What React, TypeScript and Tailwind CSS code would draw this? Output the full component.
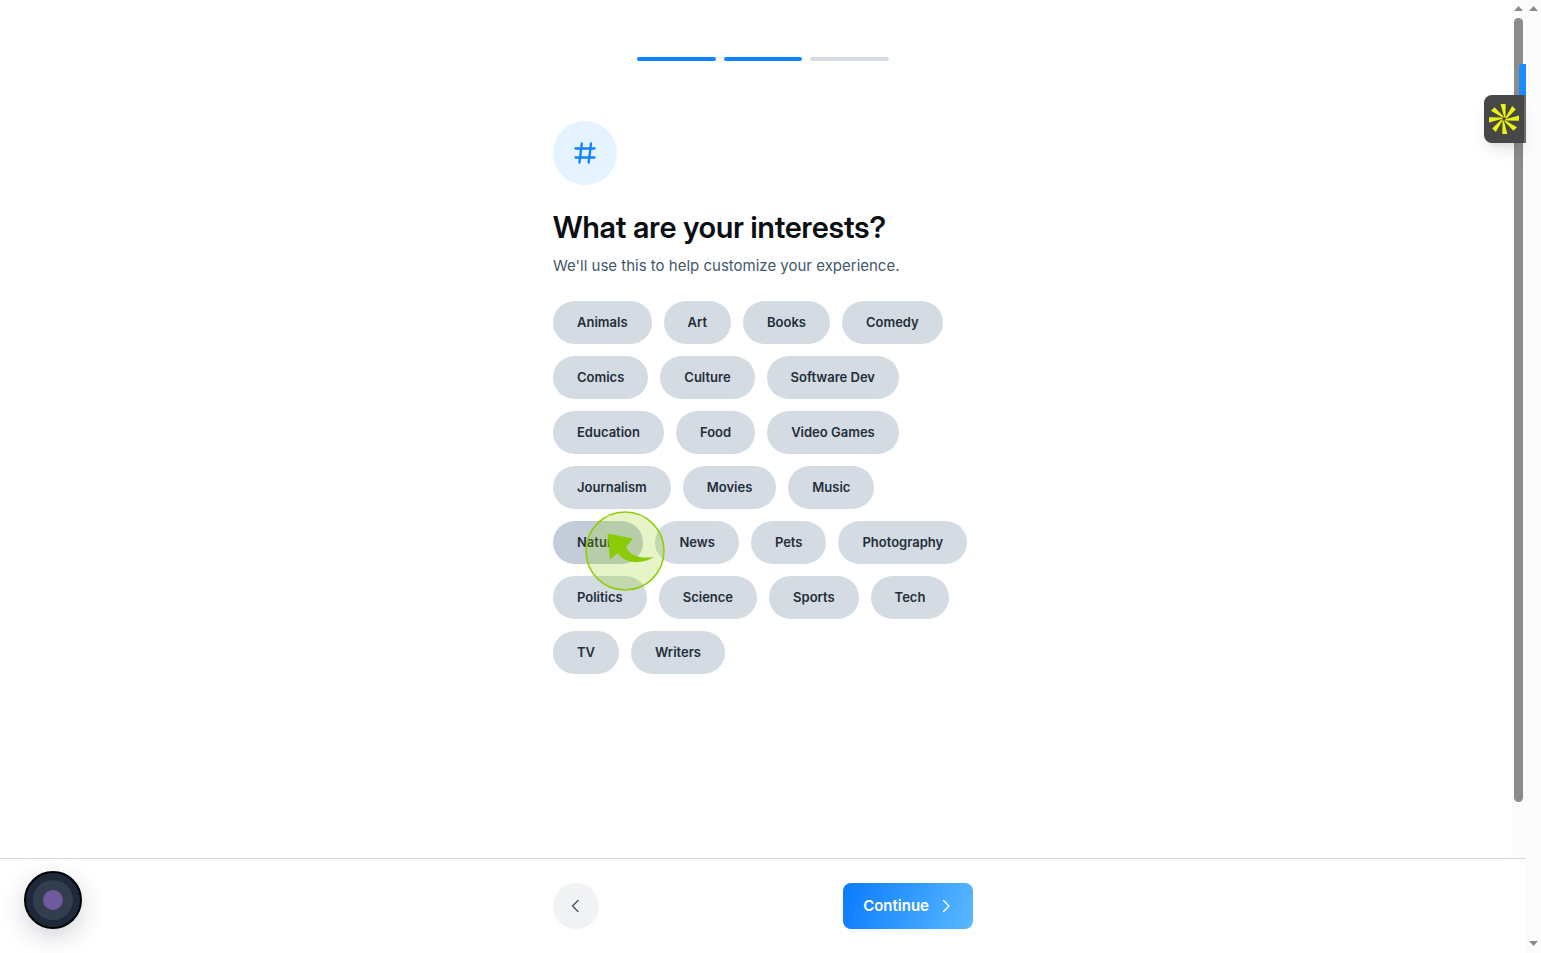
import React, { useState } from "react";

interface Interest {
  id: string;
  label: string;
}

const INTERESTS: Interest[] = [
  { id: "animals", label: "Animals" },
  { id: "art", label: "Art" },
  { id: "books", label: "Books" },
  { id: "comedy", label: "Comedy" },
  { id: "comics", label: "Comics" },
  { id: "culture", label: "Culture" },
  { id: "dev", label: "Software Dev" },
  { id: "education", label: "Education" },
  { id: "food", label: "Food" },
  { id: "gaming", label: "Video Games" },
  { id: "journalism", label: "Journalism" },
  { id: "movies", label: "Movies" },
  { id: "music", label: "Music" },
  { id: "nature", label: "Nature" },
  { id: "news", label: "News" },
  { id: "pets", label: "Pets" },
  { id: "photography", label: "Photography" },
  { id: "politics", label: "Politics" },
  { id: "science", label: "Science" },
  { id: "sports", label: "Sports" },
  { id: "tech", label: "Tech" },
  { id: "tv", label: "TV" },
  { id: "writers", label: "Writers" },
];

const StepBar: React.FC<{ step: number; total: number }> = ({
  step,
  total,
}) => (
  <div className="w-3/5 mx-auto flex gap-2">
    {Array.from({ length: total }, (_, i) => (
      <div
        key={i}
        className={`h-1 flex-1 rounded-full ${
          i < step ? "bg-[#1083fe]" : "bg-[#d4dbe2]"
        }`}
      />
    ))}
  </div>
);

const ScrollArrow: React.FC<{ down?: boolean }> = ({ down }) => (
  <svg
    width="9"
    height="5"
    viewBox="0 0 9 5"
    fill="#8b8b8b"
    className={down ? "rotate-180" : ""}
  >
    <path d="M4.5 0 9 5H0Z" />
  </svg>
);

// cursor halo shown over the hovered chip
const ClickMarker: React.FC = () => (
  <svg
    width="80"
    height="80"
    viewBox="0 0 80 80"
    className="absolute left-8 -top-2.5 z-10 pointer-events-none"
  >
    <circle
      cx="40"
      cy="40"
      r="39"
      fill="#8fce00"
      fillOpacity="0.22"
      stroke="#8fce0a"
      strokeWidth="1.6"
    />
    <path
      d="M22.500 22.500 48 27.500 41 36C45 44.500 55 48 69 46C60 52 41 55 33 42L25 48.500Z"
      fill="#8acb08"
    />
  </svg>
);

const AssistantTab: React.FC = () => (
  <button
    aria-label="Open assistant"
    className="absolute right-0 top-[95px] z-20 w-[42px] h-12 flex items-center pl-1 rounded-l-lg bg-[#474747] border-r-2 border-[#6b6b6b] shadow-lg"
  >
    <svg width="32" height="32" viewBox="-16 -16 32 32" fill="#e9f50c">
      {[0, 45, 90, 135, 180, 225, 270, 315].map((deg) => (
        <path
          key={deg}
          d="M-3.400-15H1.700L1.500-2.200.3-1.200Z"
          transform={`rotate(${deg})`}
        />
      ))}
    </svg>
  </button>
);

const App: React.FC = () => {
  const [selected, setSelected] = useState<string[]>([]);

  const toggle = (id: string) =>
    setSelected((prev) =>
      prev.includes(id) ? prev.filter((i) => i !== id) : [...prev, id],
    );

  return (
    <div className="h-screen flex bg-white font-['Inter',sans-serif] text-[#0b0f14]">
      <div className="relative flex-1 min-w-0 flex flex-col">
        <div className="relative flex-1 min-h-0 flex">
          <main className="flex-1 min-w-0 pl-[15px] pt-[57px]">
            <div className="w-full max-w-[420px] mx-auto">
              <StepBar step={2} total={3} />

              <div className="mt-[60px] w-16 h-16 rounded-full bg-[#e5f2ff] flex items-center justify-center">
                <svg
                  width="24"
                  height="24"
                  viewBox="0 0 24 24"
                  fill="none"
                  stroke="#1083fe"
                  strokeWidth="2.300"
                  strokeLinecap="round"
                >
                  <path d="M2.500 7.500h19M2.500 16.500h19M8.800 2.500l-2.300 19M18 2.500l-2.300 19" />
                </svg>
              </div>

              <h1 className="mt-6 font-['Inter_Display','Inter',sans-serif] text-[30px] leading-9 font-semibold">
                What are your interests?
              </h1>
              <p className="mt-2 text-[15px] leading-[26px] text-[#42576c]">
                We'll use this to help customize your experience.
              </p>

              <div className="mt-[22px] flex flex-wrap gap-3">
                {INTERESTS.map(({ id, label }) => (
                  <div key={id} className="relative">
                    <button
                      aria-pressed={selected.includes(id)}
                      onClick={() => toggle(id)}
                      className={`h-[43px] px-6 rounded-full text-[13px] font-semibold text-[#232e3a] ${
                        id === "nature" || selected.includes(id)
                          ? "bg-[#c3cdd9]"
                          : "bg-[#d4dbe2]"
                      }`}
                    >
                      {label}
                    </button>
                    {id === "nature" && <ClickMarker />}
                  </div>
                ))}
              </div>
            </div>
          </main>

          <div className="w-[15px] shrink-0 bg-[#fcfcfc] flex flex-col items-center pt-1.5">
            <ScrollArrow />
            <div className="mt-[7px] mb-14 w-[9px] flex-1 rounded-full bg-[#8b8b8b]" />
          </div>
          <div className="absolute right-0 top-16 w-[7px] h-10 rounded-tl bg-[#1a8cff]" />
        </div>

        <footer className="border-t border-[#d4dbe2] py-6">
          <div className="w-full max-w-[420px] mx-auto flex items-center justify-between">
            <button
              aria-label="Go back"
              className="w-[46px] h-[46px] rounded-full bg-[#f1f3f5] flex items-center justify-center"
            >
              <svg
                width="16"
                height="16"
                viewBox="0 0 16 16"
                fill="none"
                stroke="#455668"
                strokeWidth="1.400"
                strokeLinecap="round"
                strokeLinejoin="round"
              >
                <path d="M10 2.500 4.500 8l5.500 5.500" />
              </svg>
            </button>
            <button className="h-[46px] px-5 rounded-lg bg-linear-[110deg,#0a7aff,#59b9ff] flex items-center gap-2 text-[15px] font-semibold text-white">
              Continue
              <svg
                width="16"
                height="16"
                viewBox="0 0 16 16"
                fill="none"
                stroke="currentColor"
                strokeWidth="1.400"
                strokeLinecap="round"
                strokeLinejoin="round"
              >
                <path d="M6.500 2.500 12 8l-5.500 5.500" />
              </svg>
            </button>
          </div>
        </footer>

        <AssistantTab />

        <button
          aria-label="Record"
          className="absolute left-6 bottom-6 w-[58px] h-[58px] rounded-full border-2 border-black bg-[#1e293b] flex items-center justify-center shadow-[0_8px_24px_rgba(30,41,59,0.2)]"
        >
          <span className="w-10 h-10 rounded-full bg-[#323e4d] flex items-center justify-center">
            <span className="w-5 h-5 rounded-full bg-[#6f5a9f]" />
          </span>
        </button>
      </div>

      <div className="w-[15px] shrink-0 bg-[#fcfcfc] flex flex-col items-center justify-between pt-1.5 pb-[7px]">
        <ScrollArrow />
        <ScrollArrow down />
      </div>
    </div>
  );
};

export default App;
